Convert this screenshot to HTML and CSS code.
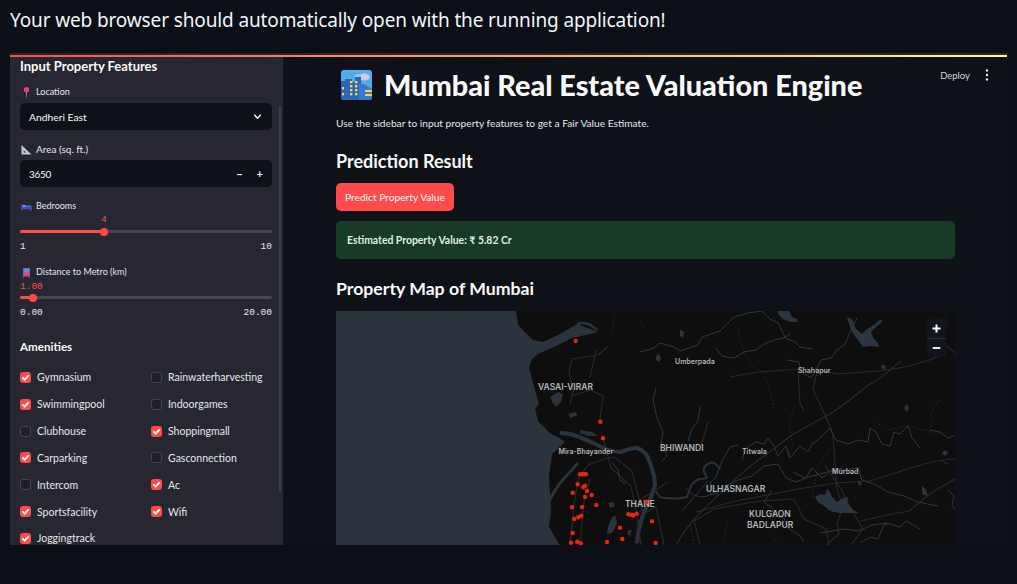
FILE: index.html
```html
<!DOCTYPE html>
<html lang="en">
<head>
  <meta charset="UTF-8">
  <meta name="viewport" content="width=device-width, initial-scale=1.0">
  <title>Mumbai Real Estate Valuation Engine</title>
  <link rel="stylesheet" href="styles.css">
</head>
<body>
  <p class="console-line">Your web browser should automatically open with the running application!</p>

  <div class="frame">
    <aside class="sidebar">
      <h3 class="side-title">Input Property Features</h3>

      <label class="field-label">
        <svg class="emoji" viewBox="0 0 12 12"><path d="M5.6 5h.9l-.2 6.8h-.4z" fill="#b9b9c4"/><circle cx="6" cy="3" r="2.9" fill="#e8447c"/></svg>
        Location
      </label>
      <div class="box select-box">
        <span>Andheri East</span>
        <svg class="chevron" viewBox="0 0 12 12"><path d="M2.5 4.2 6 7.8l3.5-3.6" fill="none" stroke="#fafafa" stroke-width="1.5"/></svg>
      </div>

      <label class="field-label label-area">
        <svg class="emoji" viewBox="0 0 12 12"><path d="M.5 1 11.5 11.5H.5zM3 7v2.4h2.6z" fill="#c3c6d0" fill-rule="evenodd"/></svg>
        Area (sq. ft.)
      </label>
      <div class="box number-box">
        <span class="number-value">3650</span>
        <span class="steppers"><b>−</b><b>+</b></span>
      </div>

      <label class="field-label label-beds">
        <svg class="emoji" viewBox="0 0 12 12"><path d="M1 3.5v7M11 6v4.5" stroke="#6a4fb0" stroke-width="1.2"/><rect x="1" y="6" width="10" height="3" fill="#4a48c8"/><rect x="2" y="4.4" width="3" height="1.8" fill="#8fb4e8"/><rect x="5" y="4.8" width="6" height="1.6" fill="#3578d8"/></svg>
        Bedrooms
      </label>
      <div class="slider">
        <div class="slider-value val-beds">4</div>
        <div class="track"><div class="track-fill" style="width: 84px"></div></div>
        <div class="slider-ends"><span>1</span><span>10</span></div>
      </div>

      <label class="field-label label-metro">
        <svg class="emoji" viewBox="0 0 12 12"><rect x="2.2" y="1" width="7.6" height="9.4" rx="1.2" fill="#8a5cc0"/><rect x="3" y="2.4" width="6" height="3" fill="#4f9ae8"/><rect x="3" y="5.4" width="6" height="3.8" fill="#e8486e"/><path d="M3.5 10.4 2.6 11.6M8.5 10.4l.9 1.2" stroke="#9a9aa8"/></svg>
        Distance to Metro (km)
      </label>
      <div class="slider">
        <div class="slider-value val-metro">1.00</div>
        <div class="track"><div class="track-fill" style="width: 13px"></div></div>
        <div class="slider-ends"><span>0.00</span><span>20.00</span></div>
      </div>

      <h3 class="side-title amenities-title">Amenities</h3>
      <div class="amenities">
        <div class="check on">Gymnasium</div>
        <div class="check">Rainwaterharvesting</div>
        <div class="check on">Swimmingpool</div>
        <div class="check">Indoorgames</div>
        <div class="check">Clubhouse</div>
        <div class="check on">Shoppingmall</div>
        <div class="check on">Carparking</div>
        <div class="check">Gasconnection</div>
        <div class="check">Intercom</div>
        <div class="check on">Ac</div>
        <div class="check on">Sportsfacility</div>
        <div class="check on">Wifi</div>
        <div class="check on">Joggingtrack</div>
      </div>
      <div class="scroll-thumb"></div>
    </aside>

    <main class="main">
      <div class="toolbar">
        <span>Deploy</span>
        <svg class="kebab" viewBox="0 0 4 14"><circle cx="2" cy="2.5" r="1.2"/><circle cx="2" cy="7" r="1.2"/><circle cx="2" cy="11.5" r="1.2"/></svg>
      </div>

      <h1 class="page-title">
        <svg class="city-icon" viewBox="0 0 31 30">
          <rect width="31" height="30" rx="3" fill="#52ace8"/>
          <ellipse cx="23" cy="7" rx="6" ry="3.6" fill="#cfc6ee"/>
          <ellipse cx="17" cy="6" rx="3.4" ry="2" fill="#a9b8ee"/>
          <path d="M0 11h4V9h7v3h3V7h6v23H3a3 3 0 0 1-3-3z" fill="#2b66b8"/>
          <path d="M18 30V14h5l8 5v8a3 3 0 0 1-3 3z" fill="#3a78d4"/>
          <g fill="#f5d54a">
            <rect x="9" y="11" width="2.4" height="2.4"/><rect x="14" y="11" width="2.4" height="2.4"/>
            <rect x="9" y="15" width="2.4" height="2.4"/><rect x="14" y="15" width="2.4" height="2.4"/>
            <rect x="9" y="19" width="2.4" height="2.4"/><rect x="14" y="19" width="2.4" height="2.4"/>
            <rect x="9" y="23" width="2.4" height="2.4"/><rect x="14" y="23" width="2.4" height="2.4"/>
            <rect x="1" y="17" width="2" height="2.4"/><rect x="1" y="23" width="2" height="2.4"/>
            <rect x="24" y="20" width="7" height="2"/><rect x="24" y="24" width="7" height="2"/>
          </g>
        </svg>
        <span>Mumbai Real Estate Valuation Engine</span>
      </h1>
      <p class="intro">Use the sidebar to input property features to get a Fair Value Estimate.</p>

      <h2 class="section-title">Prediction Result</h2>
      <button class="predict" type="button">Predict Property Value</button>
      <div class="result"><strong>Estimated Property Value: ₹ 5.82 Cr</strong></div>

      <h2 class="section-title map-title">Property Map of Mumbai</h2>
      <div class="map">
        <svg class="map-art" viewBox="336 311 619 234" width="619" height="234">
          <rect x="336" y="311" width="619" height="234" fill="#0e0e0f"/>
          <!-- sea and coast -->
          <path fill="#2b343c" d="M336 311H516l2 14 15 15 10 2 17-8 17-10 13 5 8 3-26 6-18 9-16 7-6 5-3 9 5 18 5 18-4 5 3 12 13 13 10 5 4 3-13 12-3 22 2 35-2 16 15 25H336z"/>
          <g fill="none" stroke="#2b343c">
            <path stroke-width="4" d="M560 433c12-1 24 6 33 10 10 5 18 9 27 9 6-1 11-5 17-4 7 2 11 8 13 15 3 8 5 14 5 22-3 12-8 20-12 30-3 8-5 18-6 28"/>
            <path stroke-width="2.5" d="M577 324c8-3 14 0 20 6M565 334c4-5 8-2 12-4"/>
            <path stroke-width="3" d="M548 503c6-12 14-24 24-33 2-3 4-5 6-7"/>
            <path stroke-width="2" d="M655 490l5 7c8 2 18 2 27 0 3-8 3-14 12-18 6 0 8-1 8-2 -4-5-6-10 3-14 4-2 7 2 10 6"/>
          </g>
          <path fill="#2b343c" d="M513 362l5 1 2 4-4-1zM550 397l8-5 5 2-2 8-5 5-3-4zM569 414l6-2 3 3-8 3zM580 430l12 2 6 4-10 0-8-3zM608 503l5-1 2 4-5 2zM612 517l4-1 1 8-5 9-5 1 1-7zM628 530l4 0-2 6-3-2z"/>
          <!-- roads -->
          <g fill="none" stroke="#2a2b2d" stroke-width="1.1">
            <path d="M608 347c-6 4-8 6-10 8l-26 4-3 12 4 20-3 14M600 420l3-24-12-6-20 6M596 350l-6 28M603 438l8 30 20 18 6 30 4 29"/>
            <path d="M570 545l4-40 4-26 10-14 16-6 10-2 18 14 10 40M580 545l4-44 6-22M636 545l6-30 14-8 8 38"/>
            <path d="M676 545c10-18 20-28 26-34 14-14 30-30 50-46l40-30 36-20c18-10 36-28 44-32 10-4 22-18 30-22M823 371l14 3 42-3c20-2 44-8 64-16M817 372l-4 16c2 10 14 26 20 48l4 54 6 16-6 18 2 10-14 12M730 377l28-5 40-3 2 34 4 8M700 450l8-28M682 511l26-30M640 500l28-18M696 512l44-12c24-4 42-8 58-11l38-6 34-2 44-14c20-6 30-8 40-8l30-6"/>
            <path d="M700 545l-6-24 20-12 46-8 34-2 10 20 22 10 4 20M825 465l16 24 10 20 12 20 -12 16M945 345l18 14 8 26 6 24M940 460l8 4M955 479l-24 14-22 18-22 4-26 6"/>
          </g>
          <g fill="none" stroke="#2a2b2d" stroke-dasharray="1.5 2" stroke-width="1">
            <path d="M738 330l6 22 8 14 12 8 8 24 2 12M795 405l-6 18 4 24-6 10M830 448l-12 18-6 32M940 400c-6 6-10 12-8 20l-2 8M876 422l12 8 20-4 32 8M728 520l-6 26M770 535l10 10M690 522l4 22"/>
            <path d="M944 311c4 8 2 14 4 18M640 320l4 8M615 317l-4 16"/>
          </g>
          <!-- rivers -->
          <g fill="none" stroke="#2c3a46" stroke-width="1">
            <path d="M640 352l14-4 6-5 14 4 6 4 18-6 4-8 18-6 14-14 14-4 14-2 8 8 8 4 8 16 8 2 6 6 12 2M716 348l6 8 12 2 10-6 12-2 8-6 10-4 10-2 6-4"/>
            <path d="M787 360l12 2 2 10 10 6 6-10 4-8 10-2 6-8 8-6 6-14 6-12M656 388l-3 12 4 18 6 14-2 10 6 14-6 6M700 407l-2 14-6 8-4 12M738 445l-8 2-8 14-6 16-6 6 8 10-8 2M742 460l4-12 10-6 8 2 4-6 6 8 4 10 8-10 4 12 10-12 8 6 4-8 8-6 10-10 6 12 12 4 10-4 10 2 2-14 6 4 6 12 8 2 4-14 6 2 8-8 4 12 8 10"/>
            <path d="M686 488c6 8 14 10 22 8 8-6 16-10 22-12l8-4 14-4 12-10 14-2 8 14 10 4 10-4 6-10 10 10 10-8 10 0 16-2 4 12 12 4 14 8 16 4 14 6 20 4"/>
            <path d="M793 472l12 6 22-6 16-4M772 490l-8 12 8 6 2 8 10 2 4 10 12 8 4 6M820 533l24-4 14 2 14-6 14-2 14 4 6-6 14 8M860 543l10-6 8 2 6-14 6-2M948 490l6 6-2 10 6 6"/>
            <path d="M939 356l6-3M930 430l10 2 8 6 6-2M612 462l6 8 2 10 6 4"/>
          </g>
          <!-- reservoirs -->
          <path fill="#2c3640" d="M777 311h12l3 6 5 2 1 3-8 0-7-3-4-4zM847 317l5 2 4 10 6 5 4-4 6-4 8-6 3 1-7 6-5 5 2 6 5 5 1 4-10-1-6 1-5-7-6-8-3-8zM815 497l5-3 5 1 2-6 3 3 2 5 5 5 6-4 5-1-1 6 6 7 6 3-10 0-10 0-9-2-6-5-6-4-3-5z"/>
          <path fill="#2c3640" d="M656 356l3-2 2 4-2 4-3-2zM680 330l4 2-1 6-3-2zM882 364l4 2-1 4-4-2zM907 404l2 4-2 4-3-4zM944 450l4 2-2 4-4-2zM858 480l4 4-2 2-2-2zM922 486l4 4 2 6-6-2z"/>
          <!-- labels -->
          <g class="map-labels">
            <text class="city-l" x="538" y="390">VASAI-VIRAR</text>
            <text class="city-s" x="558.5" y="454">Mira-Bhayander</text>
            <text class="city-l" x="625" y="507">THANE</text>
            <text class="city-l" x="660" y="451">BHIWANDI</text>
            <text class="city-s" x="675" y="364">Umberpada</text>
            <text class="city-s" x="798" y="373">Shahapur</text>
            <text class="city-s" x="742" y="454">Titwala</text>
            <text class="city-s" x="832" y="474">Murbad</text>
            <text class="city-l" x="706" y="492">ULHASNAGAR</text>
            <text class="city-l" x="749" y="517">KULGAON</text>
            <text class="city-l" x="747" y="528">BADLAPUR</text>
          </g>
          <!-- property points -->
          <g fill="#e8260c">
            <circle cx="575.7" cy="341" r="2.2"/><circle cx="600.3" cy="421.7" r="2.2"/><circle cx="603" cy="438.3" r="2.2"/>
            <circle cx="580" cy="474.3" r="2.2"/><circle cx="582.3" cy="474.3" r="2.2"/><circle cx="584.3" cy="474.3" r="2.2"/><circle cx="586" cy="474.3" r="2.2"/>
            <circle cx="577.7" cy="484.3" r="2.2"/><circle cx="583.3" cy="487.3" r="2.2"/><circle cx="585" cy="485.7" r="2.2"/><circle cx="587" cy="491" r="2.2"/>
            <circle cx="591.7" cy="495" r="2.2"/><circle cx="572.7" cy="492.7" r="2.2"/><circle cx="585" cy="497" r="2.2"/><circle cx="596.3" cy="505" r="2.2"/>
            <circle cx="572" cy="507.3" r="2.2"/><circle cx="582" cy="507" r="2.2"/><circle cx="574.3" cy="519" r="2.2"/><circle cx="578.3" cy="517.3" r="2.2"/>
            <circle cx="581.3" cy="515.7" r="2.2"/><circle cx="572.7" cy="533" r="2.2"/><circle cx="571" cy="542.7" r="2.2"/><circle cx="577.3" cy="541.7" r="2.2"/>
            <circle cx="580.7" cy="543.3" r="2.2"/><circle cx="607" cy="542" r="2.2"/><circle cx="620" cy="527.7" r="2.2"/><circle cx="622.3" cy="539" r="2.2"/>
            <circle cx="646.3" cy="501.7" r="2.2"/><circle cx="628.3" cy="514.3" r="2.2"/><circle cx="631" cy="514.7" r="2.2"/><circle cx="633.3" cy="515.3" r="2.2"/>
            <circle cx="636.7" cy="513.7" r="2.2"/><circle cx="652" cy="521.3" r="2.2"/><circle cx="655.7" cy="543" r="2.2"/>
          </g>
        </svg>
        <div class="zoom-ctl">
          <svg viewBox="0 0 19 19"><path d="M9.5 5.5v8M5.5 9.5h8" stroke="#fafafa" stroke-width="2"/></svg>
          <svg viewBox="0 0 19 19"><path d="M5.5 9.5h8" stroke="#fafafa" stroke-width="2"/></svg>
        </div>
      </div>
    </main>
  </div>
</body>
</html>
```

FILE: styles.css
```css
*, *::before, *::after {
  box-sizing: border-box;
}
html, body {
  height: 100%;
}
body {
  margin: 0;
  background-color: #0c0f18;
  color: #fafafa;
  font-family: "Lato", "Noto Sans", Arial, sans-serif;
  overflow: hidden;
}
.console-line {
  margin: 0;
  padding: 7px 10px 0;
  height: 53px;
  font-family: "Noto Sans", Arial, sans-serif;
  font-size: 19px;
  letter-spacing: -0.13px;
  line-height: 27px;
  color: #f2f6fa;
}

.frame {
  position: relative;
  display: flex;
  height: 492px;
  margin: 0 10px;
  overflow: hidden;
  background-color: #0e1117;
}
.frame::before {
  content: "";
  position: absolute;
  top: 0;
  left: 0;
  right: 0;
  height: 2px;
  background-color: #262730;
  z-index: 2;
}
.frame::after {
  content: "";
  position: absolute;
  top: 2px;
  left: 0;
  right: 0;
  height: 2px;
  background: linear-gradient(90deg, #ff4b4b, #fffd80);
  z-index: 2;
}

/* sidebar */
.sidebar {
  position: relative;
  flex: 0 0 273px;
  padding: 5px 11px 0 10px;
  background-color: #262730;
  overflow: hidden;
}
.side-title {
  margin: 0;
  height: 17px;
  font-size: 13px;
  line-height: 17px;
  font-weight: 700;
}
.field-label {
  display: flex;
  align-items: center;
  gap: 4px;
  height: 14px;
  margin-top: 10px;
  font-size: 9px;
  line-height: 14px;
  color: #e6e6ea;
}
.emoji {
  width: 11px;
  height: 11px;
  margin-left: 1px;
  flex: none;
}
.box {
  display: flex;
  align-items: center;
  justify-content: space-between;
  height: 27px;
  margin-top: 4px;
  padding: 0 9px;
  background-color: #0e1117;
  border-radius: 5px;
  font-size: 10.3px;
}
.number-value {
  font-size: 10px;
  letter-spacing: -0.3px;
}
.chevron {
  width: 11px;
  height: 11px;
}
.steppers {
  display: flex;
  gap: 14px;
  font-size: 11px;
}
.label-area {
  margin-top: 12px;
  font-size: 10px;
}
.label-beds {
  margin-top: 12px;
}
.label-metro {
  margin-top: 12px;
}
.slider-value {
  height: 12px;
  margin-top: 1px;
  font-family: "Liberation Mono", monospace;
  font-size: 9.5px;
  line-height: 12px;
  color: #ff4b4b;
}
.val-beds {
  padding-left: 81px;
}
.val-metro {
  height: 11px;
  margin-top: 2px;
}
.track {
  position: relative;
  height: 3px;
  margin-top: 4px;
  border-radius: 2px;
  background-color: #45464f;
}
.track-fill {
  position: relative;
  height: 3px;
  border-radius: 2px;
  background-color: #ff4b4b;
}
.track-fill::after {
  content: "";
  position: absolute;
  right: -4px;
  top: -2.5px;
  width: 8px;
  height: 8px;
  border-radius: 50%;
  background-color: #ff4b4b;
}
.slider-ends {
  display: flex;
  justify-content: space-between;
  height: 12px;
  margin-top: 8px;
  font-family: "Liberation Mono", monospace;
  font-size: 9.5px;
  line-height: 12px;
  color: #e6e6ea;
}
.amenities-title {
  margin-top: 19px;
  font-size: 11.6px;
}
.amenities {
  display: grid;
  grid-template-columns: 131px 1fr;
  grid-auto-rows: 26.85px;
  margin-top: 9px;
}
.check {
  display: flex;
  align-items: center;
  gap: 6px;
  font-size: 10.5px;
  color: #e6e6ea;
}
.check::before {
  content: "";
  flex: none;
  width: 11px;
  height: 11px;
  border: 1px solid #43444e;
  border-radius: 3px;
  background-color: #1d1e26;
}
.check.on::before {
  border: none;
  background: #ff4b4b url("data:image/svg+xml,%3Csvg xmlns='http://www.w3.org/2000/svg' viewBox='0 0 11 11'%3E%3Cpath d='M2.4 5.4 4.6 7.6 8.7 3.4' fill='none' stroke='white' stroke-width='2'/%3E%3C/svg%3E");
}
.scroll-thumb {
  position: absolute;
  top: 53px;
  right: 2px;
  width: 2px;
  height: 386px;
  background-color: #3c3d47;
}

/* main area */
.main {
  position: relative;
  flex: 1;
  padding: 15px 52px 0 53px;
}
.toolbar {
  position: absolute;
  top: 15px;
  right: 18px;
  display: flex;
  align-items: center;
  gap: 15px;
  font-size: 9.5px;
  color: #d5d6da;
}
.kebab {
  width: 4px;
  height: 14px;
  fill: #e6e6ea;
}
.page-title {
  display: flex;
  align-items: center;
  gap: 12px;
  height: 34px;
  margin: 0;
  padding-left: 5px;
  font-size: 28.8px;
  line-height: 34px;
  font-weight: 900;
}
.city-icon {
  width: 31px;
  height: 30px;
  flex: none;
}
.intro {
  margin: 13px 0 0;
  height: 16px;
  font-size: 10.2px;
  line-height: 16px;
  color: #e6e6ea;
}
.section-title {
  margin: 18px 0 0;
  height: 24px;
  font-size: 18px;
  line-height: 24px;
  font-weight: 700;
}
.predict {
  display: block;
  height: 28px;
  margin-top: 10px;
  padding: 0 9px;
  border: none;
  border-radius: 5px;
  background-color: #ff4b4b;
  color: #fafafa;
  font-family: inherit;
  font-size: 10.2px;
}
.result {
  display: flex;
  align-items: center;
  height: 38px;
  margin-top: 10px;
  padding-left: 11px;
  border-radius: 5px;
  background-color: #1a3a28;
  color: #dff0e2;
  font-size: 10.4px;
}
.result strong {
  font-weight: 700;
}
.map-title {
  margin-top: 18px;
  font-size: 17.7px;
}
.map {
  position: relative;
  height: 234px;
  margin-top: 10px;
  overflow: hidden;
}
.map-art {
  display: block;
}
.map-labels text {
  font-family: "Inter", "Noto Sans", sans-serif;
  fill: #b4b5b8;
}
.city-l {
  font-size: 8.5px;
  font-weight: 600;
}
.city-s {
  font-size: 7px;
  font-weight: 600;
}
.zoom-ctl {
  position: absolute;
  top: 8px;
  right: 9px;
  display: flex;
  flex-direction: column;
  width: 19px;
  border-radius: 3px;
  background-color: #11141b;
}
.zoom-ctl svg {
  display: block;
  width: 19px;
  height: 19px;
}
.zoom-ctl svg + svg {
  border-top: 1px solid #2b2d33;
}
```
